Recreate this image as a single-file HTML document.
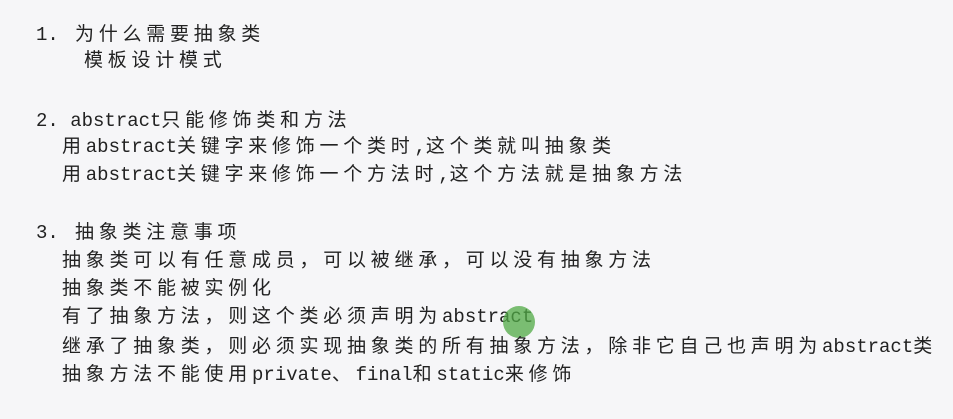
<!DOCTYPE html>
<html><head><meta charset="utf-8"><style>
body{margin:0;width:953px;height:419px;background:#f6f6f8;overflow:hidden;position:relative;
font-family:"Liberation Mono","Noto Sans CJK SC",monospace;font-size:19px;color:#222;}
.l{position:absolute;white-space:nowrap;letter-spacing:4.75px;line-height:24px;}
.l b{font-weight:normal;letter-spacing:0;}
.dot{position:absolute;left:503px;top:306px;width:32px;height:32px;border-radius:50%;background:rgba(80,170,70,0.75);}
</style></head><body>
<div class="l" style="left:36px;top:23px"><b>1.</b> 为什么需要抽象类</div>
<div class="l" style="left:84px;top:49px">模板设计模式</div>
<div class="l" style="left:36px;top:109px"><b>2. abstract</b>只能修饰类和方法</div>
<div class="l" style="left:62px;top:135px">用<b>abstract</b>关键字来修饰一个类时<b>,</b>这个类就叫抽象类</div>
<div class="l" style="left:62px;top:163px">用<b>abstract</b>关键字来修饰一个方法时<b>,</b>这个方法就是抽象方法</div>
<div class="l" style="left:36px;top:221px"><b>3.</b> 抽象类注意事项</div>
<div class="l" style="left:62px;top:249px">抽象类可以有任意成员，可以被继承，可以没有抽象方法</div>
<div class="l" style="left:62px;top:277px">抽象类不能被实例化</div>
<div class="l" style="left:62px;top:305px">有了抽象方法，则这个类必须声明为<b>abstract</b></div>
<div class="dot"></div>
<div class="l" style="left:62px;top:335px">继承了抽象类，则必须实现抽象类的所有抽象方法，除非它自己也声明为<b>abstract</b>类</div>
<div class="l" style="left:62px;top:363px">抽象方法不能使用<b>private</b>、<b>final</b>和<b>static</b>来修饰</div>
</body></html>
